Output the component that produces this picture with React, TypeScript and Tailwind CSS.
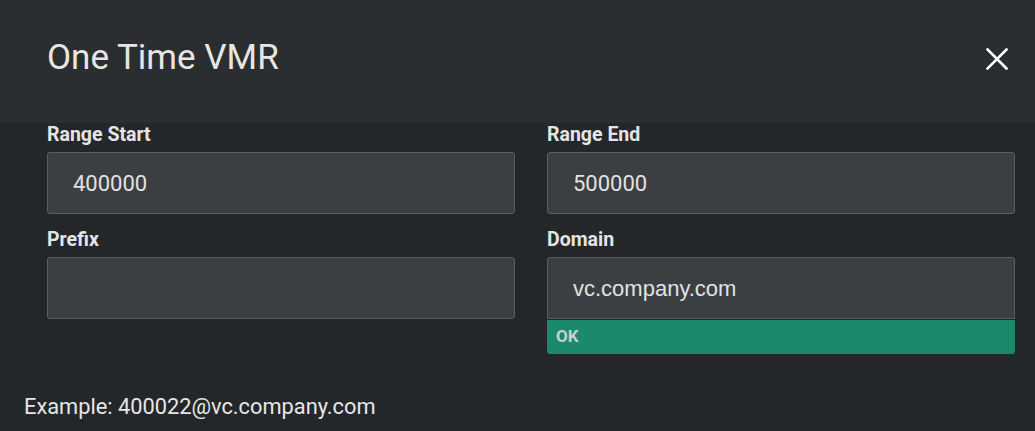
import React from "react";

function Field({ label, value, mono, children }: { label: string; value: string; mono?: boolean; children?: React.ReactNode }) {
  return (
    <div className="flex flex-col">
      <div className="h-[24px] text-[19.5px] leading-[24px] font-bold text-[#e4e4e4] mb-[5px]" style={{ fontFamily: "Roboto, sans-serif" }}>
        {label}
      </div>
      <div
        className={`h-[62px] bg-[#3b3f42] border border-[#5b5e60] flex items-center pl-[25px] text-[22px] text-[#e2e2e2] ${children ? "rounded-t-[3px]" : "rounded-[3px]"}`}
        style={{ fontFamily: mono ? "'Liberation Sans', Arial, sans-serif" : "Roboto, sans-serif" }}
      >
        {value}
      </div>
      {children}
    </div>
  );
}

export default function App() {
  return (
    <div className="w-[1035px] h-[431px] bg-[#24272a] overflow-hidden" style={{ fontFamily: "Roboto, sans-serif" }}>
      <div className="h-[123px] bg-[#2a2e31] flex items-center justify-between pl-[47px] pr-[27px] pb-[8px]">
        <div className="text-[35px] text-[#e8e6e3] leading-none">One Time VMR</div>
        <svg width="22" height="22" viewBox="0 0 22 22" className="mt-[2px]">
          <path d="M1.5 1.5 L20.5 20.5 M20.5 1.5 L1.5 20.5" stroke="#ffffff" strokeWidth="2.6" strokeLinecap="square" />
        </svg>
      </div>
      <div className="grid grid-cols-2 gap-x-[32px] gap-y-[14px] pl-[47px] pr-[20px]">
        <Field label="Range Start" value="400000" />
        <Field label="Range End" value="500000" />
        <Field label="Prefix" value="" />
        <Field label="Domain" value="vc.company.com" mono>
          <div className="h-[34px] mt-[1px] bg-[#1b896b] rounded-b-[3px] flex items-center pl-[9px] text-[17px] font-bold text-[#c9d1cd]">
            OK
          </div>
        </Field>
      </div>
      <div className="mt-[39px] pl-[24px] text-[21.8px] leading-[28px] text-[#e6e6e6]">Example: 400022@vc.company.com</div>
    </div>
  );
}
